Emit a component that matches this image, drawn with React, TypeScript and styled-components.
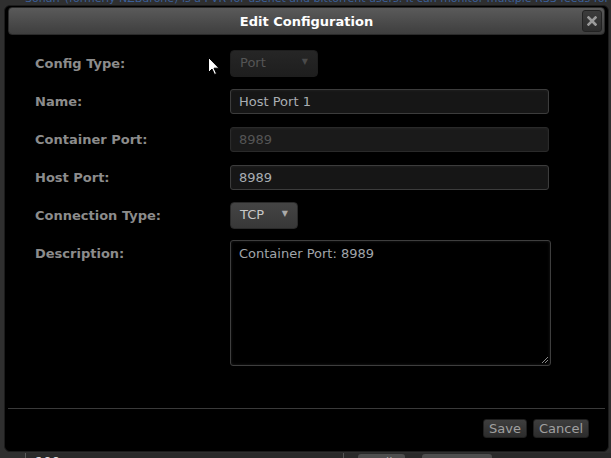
import React from 'react'
import styled, {createGlobalStyle} from 'styled-components'

const GlobalStyle = createGlobalStyle`
    html, body {
        margin: 0;
        padding: 0;
        background: #2f2f2f;
        font-family: "DejaVu Sans", Verdana, sans-serif;
    }
`

interface Field {
    label: string;
    kind: 'select' | 'input' | 'textarea';
    value: string;
    disabled?: boolean;
    width?: number;
}

const fields: Field[] = [
    {label: 'Config Type:', kind: 'select', value: 'Port', disabled: true, width: 88},
    {label: 'Name:', kind: 'input', value: 'Host Port 1'},
    {label: 'Container Port:', kind: 'input', value: '8989', disabled: true},
    {label: 'Host Port:', kind: 'input', value: '8989'},
    {label: 'Connection Type:', kind: 'select', value: 'TCP', width: 68},
    {label: 'Description:', kind: 'textarea', value: 'Container Port: 8989'},
]

/**
 * Edit Configuration modal over the app page behind it
 */
export default function App() {
    return (
        <>
            <GlobalStyle />
            <Page>
                {/* app page peeking out around the modal */}
                <Blurb>
                    Sonarr (formerly NZBdrone) is a PVR for usenet and bittorrent users. It can monitor multiple RSS feeds for new episodes
                </Blurb>
                <BottomRow>
                    <RowCell>100</RowCell>
                    <RowDivider />
                    <GhostButton $w={47}>Edit</GhostButton>
                    <GhostButton $w={70}>Remove</GhostButton>
                </BottomRow>
            </Page>

            <Modal>
                <TitleBar>
                    <Title>Edit Configuration</Title>
                    <CloseButton aria-label="close">
                        <svg width="10" height="10" viewBox="0 0 10 10">
                            <path d="M1.5 1.5 L8.5 8.5 M8.5 1.5 L1.5 8.5" stroke="#9a9a9a" strokeWidth="2.6" strokeLinecap="square" />
                        </svg>
                    </CloseButton>
                </TitleBar>

                <Form>
                    {fields.map((f) => (
                        <FormRow key={f.label} $tall={f.kind === 'textarea'}>
                            <Label $tall={f.kind === 'textarea'}>{f.label}</Label>
                            {f.kind === 'select' && (
                                <Select $disabled={!!f.disabled} style={{width: f.width}}>
                                    <span>{f.value}</span>
                                    <Arrow $disabled={!!f.disabled}>▼</Arrow>
                                </Select>
                            )}
                            {f.kind === 'input' && (
                                <TextInput $disabled={!!f.disabled}>{f.value}</TextInput>
                            )}
                            {f.kind === 'textarea' && (
                                <TextArea>
                                    {f.value}
                                    <Grip width="9" height="9" viewBox="0 0 9 9">
                                        <path d="M8 2 L2 8 M8 5 L5 8" stroke="#8a8a8a" strokeWidth="1" />
                                    </Grip>
                                </TextArea>
                            )}
                        </FormRow>
                    ))}
                </Form>

                <Footer>
                    <FooterButton>Save</FooterButton>
                    <FooterButton>Cancel</FooterButton>
                </Footer>
            </Modal>

            {/* mouse pointer captured in the screenshot */}
            <Pointer width="12" height="19" viewBox="0 0 12 19">
                <path d="M0.5 0.5 L0.5 15.5 L4 12 L6.5 17.5 L8.5 16.6 L6 11.2 L11 11.2 Z" fill="#fff" stroke="#000" strokeWidth="1" strokeLinejoin="round" />
            </Pointer>
        </>
    )
}

const Page = styled.div`
    position: relative;
    display: flow-root;
    width: 611px;
    height: 458px;
    overflow: hidden;
    background: #2f2f2f;
`

const Blurb = styled.div`
    margin: -8px 0 0 25px;
    white-space: nowrap;
    color: #3a5f9a;
    font-size: 11px;
    line-height: 13px;
`

const BottomRow = styled.div`
    position: absolute;
    left: 25px;
    right: 0;
    top: 453px;
    height: 20px;
    display: flex;
    align-items: flex-start;
    border-left: 1px solid #5a5a5a;
    background: #2a2a2a;
`

const RowCell = styled.div`
    width: 317px;
    padding: 2px 0 0 9px;
    box-sizing: border-box;
    color: #ddd;
    font-size: 12px;
    font-weight: bold;
`

const RowDivider = styled.div`
    width: 1px;
    height: 20px;
    background: #555;
    margin-right: 14px;
`

const GhostButton = styled.div<{$w: number}>`
    width: ${(p) => p.$w}px;
    height: 16px;
    margin: 1px 17px 0 0;
    background: #4e4e4e;
    border-radius: 3px;
    color: #aaa;
    font-size: 12px;
    padding-top: 2px;
    text-indent: 16px;
`

const Modal = styled.div`
    position: absolute;
    left: 4px;
    top: 5px;
    width: 605px;
    height: 447px;
    box-sizing: border-box;
    background: #000;
    border: 1px solid #1c1c1c;
    border-radius: 6px;
    padding: 1px 3px 2px 3px;
    display: flex;
    flex-direction: column;
`

const TitleBar = styled.div`
    position: relative;
    height: 28px;
    box-sizing: border-box;
    flex-shrink: 0;
    display: flex;
    align-items: center;
    justify-content: center;
    border-radius: 4px;
    border: 1px solid #2a2a2a;
    background: linear-gradient(#5a5a5a, #3e3e3e);
`

const Title = styled.span`
    color: #fff;
    font-weight: bold;
    font-size: 13px;
`

const CloseButton = styled.div`
    position: absolute;
    right: 2px;
    top: 2px;
    width: 18px;
    height: 20px;
    display: flex;
    align-items: center;
    justify-content: center;
    border-radius: 3px;
    background: linear-gradient(#3c3c3c, #2c2c2c);
    border: 1px solid #222;
`

const Form = styled.div`
    flex: 1;
    display: flex;
    flex-direction: column;
    gap: 11px;
    padding: 15px 0 0 27px;
`

const FormRow = styled.div<{$tall: boolean}>`
    display: flex;
    align-items: ${(p) => (p.$tall ? 'flex-start' : 'center')};
    height: ${(p) => (p.$tall ? '126px' : '27px')};
`

const Label = styled.div<{$tall: boolean}>`
    width: 195px;
    padding-top: ${(p) => (p.$tall ? '6px' : '0')};
    color: #8c8c8c;
    font-weight: bold;
    font-size: 13px;
`

const Select = styled.div<{$disabled: boolean}>`
    height: 27px;
    box-sizing: border-box;
    display: flex;
    align-items: center;
    justify-content: space-between;
    padding: 0 9px 2px 9px;
    border-radius: 4px;
    border: 1px solid ${(p) => (p.$disabled ? '#1e1e1e' : '#2a2a2a')};
    background: ${(p) => (p.$disabled ? 'linear-gradient(#262626, #1e1e1e)' : 'linear-gradient(#444, #383838)')};
    color: ${(p) => (p.$disabled ? '#555' : '#c8c8c8')};
    font-size: 13px;
`

const Arrow = styled.span<{$disabled: boolean}>`
    font-size: 8px;
    color: ${(p) => (p.$disabled ? '#4a4a4a' : '#aaa')};
    margin-top: -2px;
`

const TextInput = styled.div<{$disabled: boolean}>`
    width: 319px;
    height: 25px;
    box-sizing: border-box;
    display: flex;
    align-items: center;
    padding: 0 8px 1px 8px;
    border-radius: 3px;
    border: 1px solid ${(p) => (p.$disabled ? '#2a2a2a' : '#3c3c3c')};
    background: ${(p) => (p.$disabled ? '#1a1a1a' : '#161616')};
    box-shadow: inset 0 1px 3px rgba(255, 255, 255, 0.04);
    color: ${(p) => (p.$disabled ? '#555' : '#a9aeb3')};
    font-size: 13px;
`

const TextArea = styled.div`
    position: relative;
    width: 321px;
    height: 126px;
    box-sizing: border-box;
    padding: 5px 8px;
    border-radius: 3px;
    border: 1px solid #3e3e3e;
    box-shadow: inset 0 0 3px rgba(255, 255, 255, 0.12);
    background: #000;
    color: #a0a5aa;
    font-size: 13px;
`

const Grip = styled.svg`
    position: absolute;
    right: 1px;
    bottom: 1px;
`

const Footer = styled.div`
    height: 41px;
    box-sizing: border-box;
    flex-shrink: 0;
    display: flex;
    justify-content: flex-end;
    align-items: flex-start;
    gap: 6px;
    padding: 10px 16px 0 0;
    border-top: 1px solid #3a3a3a;
`

const FooterButton = styled.div`
    height: 19px;
    box-sizing: border-box;
    padding: 0 5px;
    display: flex;
    align-items: center;
    border-radius: 3px;
    border: 1px solid #1f1f1f;
    background: linear-gradient(#3e3e3e, #2c2c2c);
    color: #a0a0a0;
    font-size: 13px;
`

const Pointer = styled.svg`
    position: absolute;
    left: 208px;
    top: 57px;
    pointer-events: none;
`
